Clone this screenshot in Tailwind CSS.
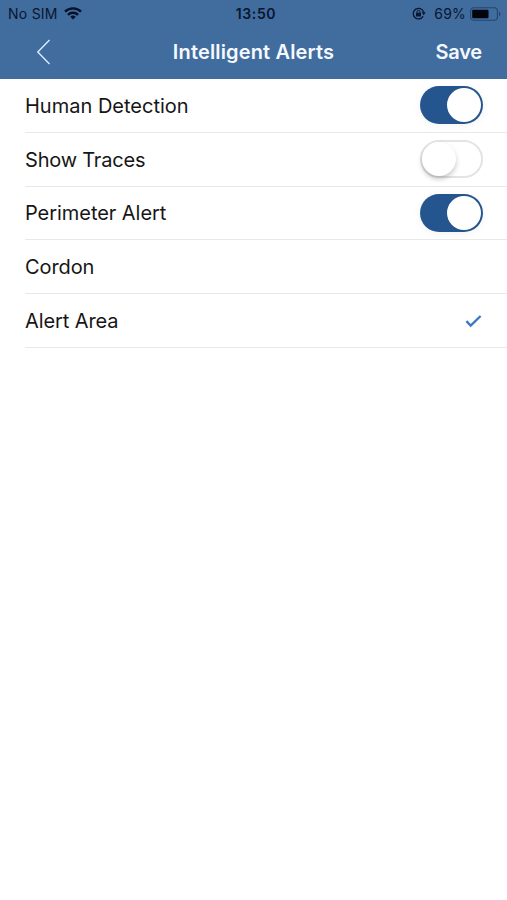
<!DOCTYPE html>
<html lang="en">
<head>
<meta charset="utf-8">
<title>Intelligent Alerts</title>
<script src="https://cdn.jsdelivr.net/npm/@tailwindcss/browser@4"></script>
</head>
<body class="bg-white font-['Inter','Liberation_Sans',sans-serif] text-[#161616] overflow-hidden">
<div class="w-[507px] h-[900px] flex flex-col">
  <header class="h-[79px] shrink-0 bg-[#416c9e]">
    <div class="grid grid-cols-[1fr_auto_1fr] items-center h-[27px] pl-2 pr-[6px] text-[#09162f] text-[14px] leading-[27px]">
      <div class="flex items-center gap-[6px]">
        <span class="tracking-[0.25px]">No SIM</span>
        <svg class="w-[18px] h-[13px]" viewBox="0 0 18 13" fill="none" stroke="#061027" stroke-width="2.4"><path d="M1 4.7a11.4 11.4 0 0 1 16 0M3.9 7.9a7.3 7.3 0 0 1 10.2 0"/><path d="M6.3 9.8a4 4 0 0 1 5.4 0L9 12.6z" fill="#061027" stroke="none"/></svg>
      </div>
      <span class="font-semibold tracking-[0.6px] pl-[3px]">13:50</span>
      <div class="flex items-center justify-end">
        <svg class="w-[14px] h-[13px] mr-[8px]" viewBox="0 0 14 13" fill="none" stroke="#09162f"><path d="M11.2 9.2A5.3 5.3 0 1 1 11.6 5" stroke-width="1.3"/><path d="M9.6 5.2h4.2l-2.1 3z" fill="#09162f" stroke="none"/><rect x="4" y="5.7" width="5" height="3.8" rx=".5" fill="#09162f" stroke="none"/><path d="M5 6V4.8a1.5 1.5 0 0 1 3 0V6"/></svg>
        <span class="mr-[4px] tracking-[0.2px]">69%</span>
        <svg class="w-[31px] h-[14px]" viewBox="0 0 31 14"><rect x=".6" y=".8" width="26.8" height="12.4" rx="3.2" fill="none" stroke="#24456f" stroke-width="1.1"/><rect x="2.2" y="2.7" width="16.3" height="8.6" rx="1" fill="#02050d"/><path d="M29 4.8q1.6.6 1.6 2.2T29 9.2z" fill="#24456f"/></svg>
      </div>
    </div>
    <div class="grid grid-cols-[1fr_auto_1fr] items-center h-[50px] px-[25px] text-[#f5f9ff]">
      <svg class="w-[15px] h-[26px] ml-[11px]" viewBox="0 0 15 26" fill="none" stroke="#dcecff" stroke-width="1.4"><path d="M13.5 1L1.8 13l11.7 12"/></svg>
      <h1 class="text-[20px] font-semibold tracking-[0.15px]">Intelligent Alerts</h1>
      <span class="text-[20px] font-semibold tracking-[-0.2px] justify-self-end">Save</span>
    </div>
  </header>
  <main class="pl-[25px] text-[20px]">
    <div class="flex items-center justify-between h-[53.8px] pr-[24px] border-b border-[#e8e8e8]">
      <span class="pt-[2px]">Human Detection</span>
      <div class="w-[63px] h-[38px] rounded-full bg-[#25558f] flex items-center justify-end pr-[2px] shadow-[0_2px_8px_rgba(0,0,0,0.05)]"><div class="size-[34px] rounded-full bg-white"></div></div>
    </div>
    <div class="flex items-center justify-between h-[53.8px] pr-[24px] border-b border-[#e8e8e8]">
      <span class="pt-[2px] tracking-[-0.2px]">Show Traces</span>
      <div class="w-[63px] h-[38px] rounded-full border-2 border-[#e4e4e4] flex items-center"><div class="size-[34px] shrink-0 rounded-full bg-white shadow-[0_3px_5px_rgba(0,0,0,0.22)]"></div></div>
    </div>
    <div class="flex items-center justify-between h-[53.8px] pr-[24px] border-b border-[#e8e8e8]">
      <span class="pt-[1px] tracking-[-0.05px]">Perimeter Alert</span>
      <div class="w-[63px] h-[38px] rounded-full bg-[#25558f] flex items-center justify-end pr-[2px] shadow-[0_2px_8px_rgba(0,0,0,0.05)]"><div class="size-[34px] rounded-full bg-white"></div></div>
    </div>
    <div class="flex items-center h-[53.8px] border-b border-[#e8e8e8]"><span class="pt-[1px] tracking-[-0.1px]">Cordon</span></div>
    <div class="flex items-center justify-between h-[53.8px] pr-[25px] border-b border-[#e8e8e8]">
      <span class="pt-[1px] tracking-[-0.1px]">Alert Area</span>
      <svg class="w-[17px] h-[14px]" viewBox="0 0 17 14" fill="none" stroke="#3b78c3" stroke-width="2.4"><path d="M1.4 7.2l4.3 4.3L15.6 2"/></svg>
    </div>
  </main>
</div>
</body>
</html>
